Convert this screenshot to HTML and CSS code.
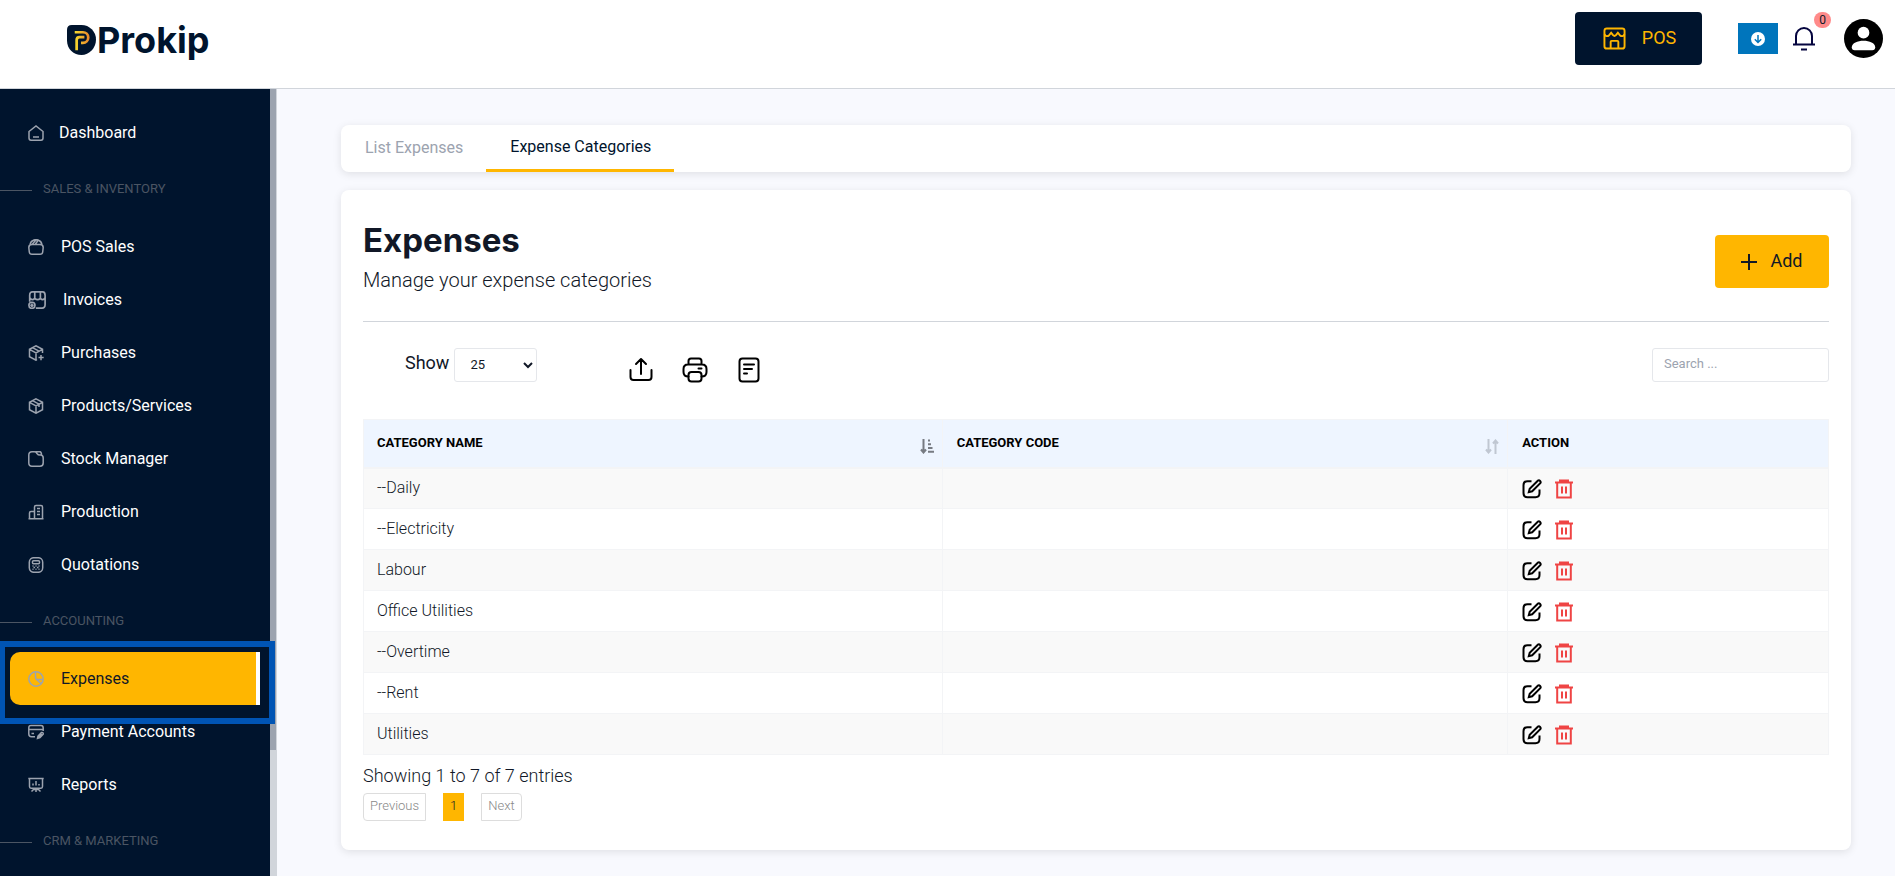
FILE: index.html
```html
<!DOCTYPE html>
<html lang="en">
<head>
    <meta charset="UTF-8">
    <meta name="viewport" content="width=device-width, initial-scale=1.0">
    <title>Expense Categories - Prokip</title>

    <link rel="stylesheet" href="styles.css">
</head>
<body>
    <!-- Icons used more than once -->
    <svg class="sprite" aria-hidden="true">
        <symbol id="icon-edit" viewBox="0 0 20 20">
            <path d="M9.500 2.200H5.500C2.500 2.200 1.500 3.200 1.500 6.200V14C1.500 17 2.500 18.200 5.500 18.200H13.500C16.500 18.200 17.500 17 17.500 14V10.500" />
            <path d="M15.800 1.700 7.700 9.700 6.800 13.100 10.200 12.300 18.300 4.200C19.400 2.600 17.500 0.600 15.800 1.700Z" />
        </symbol>
        <symbol id="icon-trash" viewBox="0 0 20 20">
            <path d="M1 3.500H19M6 3.500V1.500H14V3.500M3.200 3.500V18.500H16.800V3.500M8 7.500V14.500M12 7.500V14.500" />
        </symbol>
    </svg>

    <!-- Top bar -->
    <header class="topbar">
        <a class="logo" href="#" aria-label="Prokip">
            <svg class="logo-mark" viewBox="0 0 30 31" aria-hidden="true">
                <defs>
                    <linearGradient id="gold" gradientUnits="userSpaceOnUse" x1="8" y1="0" x2="23" y2="0">
                        <stop offset="0" stop-color="#f7dc2e" />
                        <stop offset="1" stop-color="#e8862b" />
                    </linearGradient>
                </defs>
                <path d="M5 0H15A15 15 0 0 1 30 15C30 24 23 31 15 31S0 25 0 16V5Q0 0 5 0Z" fill="#00142d" />
                <g fill="none" stroke="url(#gold)" stroke-width="2.800">
                    <path d="M8 7.500H16.500A5.500 5.500 0 0 1 16.500 18.500H14.500" />
                    <path d="M10 26V15.500Q10 12.500 13 12.500H18" />
                </g>
            </svg>
            <span>Prokip</span>
        </a>

        <div class="topbar-actions">
            <button class="pos-button" type="button">
                <svg viewBox="0 0 24 24" aria-hidden="true">
                    <rect x="1.500" y="1.500" width="21" height="21" rx="2.500" />
                    <path d="M1.500 7.500Q3.500 11 6.500 8.500L8.500 6L10.500 8.500Q12 10 13.500 8.500L15.500 6L17.500 8.500Q20.500 11 22.500 7.500M8 22.500V15.500Q8 14.500 9 14.500H15Q16 14.500 16 15.500V22.500" />
                </svg>
                POS
            </button>
            <button class="download-button" type="button" aria-label="Download">
                <svg viewBox="0 0 14 14" aria-hidden="true">
                    <circle cx="7" cy="7" r="7" fill="#fff" />
                    <path d="M7 3V10.500M3.800 7.300 7 10.500 10.200 7.300" />
                </svg>
            </button>
            <button class="bell-button" type="button" aria-label="Notifications">
                <svg viewBox="0 0 22 25" aria-hidden="true">
                    <path d="M3 18V10A8 8 0 0 1 19 10V18M0 18.500H22M8 23.500H14" />
                </svg>
                <span class="badge">0</span>
            </button>
            <button class="avatar" type="button" aria-label="Account">
                <svg viewBox="0 0 40 40" aria-hidden="true">
                    <circle cx="20" cy="20" r="20" />
                    <circle cx="20" cy="14" r="6" fill="#fff" />
                    <path d="M8 29C8 20 32 20 32 29Q32 32 29 32H11Q8 32 8 29Z" fill="#fff" />
                </svg>
            </button>
        </div>
    </header>

    <div class="layout">
        <!-- Side menu -->
        <nav class="sidebar">
            <ul class="menu">
                <li class="dashboard"><a href="#">
                    <svg viewBox="0 0 16 16"><path d="M1 6.500 8 1 15 6.500V13Q15 15.200 13 15.200H3Q1 15.200 1 13ZM5 12H11" /></svg>
                    Dashboard</a></li>
            </ul>

            <h2>SALES &amp; INVENTORY</h2>
            <ul class="menu">
                <li><a href="#">
                    <svg viewBox="0 0 16 16"><path d="M4 5.500H12Q15.200 5.500 15.200 8.500L14.700 13Q14.500 15.200 12 15.200H4Q1.500 15.200 1.300 13L.8 8.500Q.8 5.500 4 5.500ZM2 6Q2.500 2.500 5 1.500 8-.2 11 1.500 13.500 2.500 14 6M4.500 5 8 1M7.500 5 10 1.500" /></svg>
                    POS Sales</a></li>
                <li><a href="#">
                    <svg class="shop" viewBox="0 0 16 16"><path d="M1.500 9.500V4Q1.500 .8 4 .8H13Q15.200 .8 15.200 4V12Q15.200 15.200 12.500 15.200H7M1.500 6Q3.500 9 6 6.500 8.500 9 11 6.500 13.500 9 15.200 6M6 1V6.500M11 1V6.500" /><circle cx="3.500" cy="12.700" r="2.700" /><path d="M3.500 11.200V14.200M2 12.700H5" /></svg>
                    Invoices</a></li>
                <li><a href="#">
                    <svg viewBox="0 0 16 16"><path d="M14.500 8V4.300L8 .8 1.500 4.300V11.700L8 15.200 9 14.500M1.500 4.300 8 7.800 14.500 4.300M8 7.800V15M4.500 2.700 11 6.200M10.500 12.500H15.700M13 10V15.200" /></svg>
                    Purchases</a></li>
                <li><a href="#">
                    <svg viewBox="0 0 16 16"><path d="M8 .8 14.500 4.300V11.700L8 15.200 1.500 11.700V4.300ZM1.500 4.300 8 7.800 14.500 4.300M8 7.800V15M4.500 2.700 11 6.200V9" /></svg>
                    Products/Services</a></li>
                <li><a href="#">
                    <svg viewBox="0 0 16 16"><path d="M.8 4Q.8 .8 4 .8H6.500Q8 .8 9 2.500 10 4 12 4H13Q15.200 4.500 15.200 7V12Q15.200 15.200 12 15.200H4Q.8 15.200 .8 12ZM7.500 .8H12Q13.500 1 13.500 4" /></svg>
                    Stock Manager</a></li>
                <li><a href="#">
                    <svg viewBox="0 0 16 16"><path d="M.5 14.700H15.500M1.500 14.500V9Q1.500 7.500 3 7.500H6.500M6.500 14.500V3Q6.500 1.500 8 1.500H13Q14.500 1.500 14.500 3V14.500M9 4.500H12M9 7.500H12M9 10.500H12" /></svg>
                    Production</a></li>
                <li><a href="#">
                    <svg viewBox="0 0 16 16"><rect x="1.300" y=".7" width="13.400" height="14.600" rx="4.500" /><rect x="4.500" y="3.700" width="7" height="3" rx="1" /><path d="M4.500 9H5.500M7.500 9H8.500M10.500 9H11.500M5.500 10.500H7M9 10.500H10.500M4.500 12.200H5.500M7.500 12.200H8.500M10.500 12.200H11.500" /></svg>
                    Quotations</a></li>
            </ul>

            <h2>ACCOUNTING</h2>
            <ul class="menu">
                <li class="active"><a href="#" aria-current="page">
                    <svg viewBox="0 0 16 16"><circle cx="8" cy="8" r="7.200" /><path d="M7.500 1V6.500Q7.500 8.500 9.500 8.500H15M8.500 8.500 13 12.500" /></svg>
                    Expenses</a></li>
                <li><a href="#">
                    <svg viewBox="0 0 16 16"><path d="M.8 5.500H15.200V4Q15.200 1.500 13 1.500H3Q.8 1.500 .8 4V10Q.8 12.700 3.500 12.700H7M15.200 5V7M3.500 9.500H6M9.500 14.500 10 12 13.500 8.500Q15.500 8 15.200 10.200L12 13.700ZM10.500 13.500 14 10" /></svg>
                    Payment Accounts</a></li>
                <li><a href="#">
                    <svg viewBox="0 0 16 16"><path d="M.3 1.500H15.700M1.500 1.500V9.500Q1.500 11.200 3 11.200H13Q14.500 11.200 14.500 9.500V1.500M5 8.500V6.500M8 8.500V4M11 8.500V7M8 11.500V15M6 12 3.500 14.500M10 12 12.500 14.500M5 12.500H11" /></svg>
                    Reports</a></li>
            </ul>

            <h2>CRM &amp; MARKETING</h2>
        </nav>
        <div class="scroll-track"><div class="scroll-thumb"></div></div>

        <!-- Page content -->
        <main>
            <nav class="tabs">
                <a href="#">List Expenses</a>
                <a class="current" href="#">Expense Categories</a>
            </nav>

            <section class="card">
                <div class="card-header">
                    <div>
                        <h1>Expenses</h1>
                        <p>Manage your expense categories</p>
                    </div>
                    <button class="add-button" type="button">
                        <svg viewBox="0 0 16 16" aria-hidden="true"><path d="M8 0V16M0 8H16" /></svg>
                        Add
                    </button>
                </div>

                <div class="toolbar">
                    <label for="pageSize">Show</label>
                    <select id="pageSize">
                        <option>10</option>
                        <option selected>25</option>
                        <option>50</option>
                        <option>100</option>
                    </select>
                    <div class="exports">
                        <button type="button" aria-label="Export">
                            <svg viewBox="0 0 26 26"><path d="M2.500 13V20Q2.500 23 5.500 23H20.500Q23.500 23 23.500 20V13M13 17V2.500M8 7 13 2 18 7" /></svg>
                        </button>
                        <button type="button" aria-label="Print">
                            <svg viewBox="0 0 26 26"><path d="M6.500 7V4Q6.500 1.500 9 1.500H17Q19.500 1.500 19.500 4V7M6.500 19.500Q1.500 19.500 1.500 15V12Q1.500 7.500 6 7.500H20Q24.500 7.500 24.500 12V15Q24.500 19.500 19.500 19.500M16.500 11.500H19.500" /><rect x="6.500" y="15" width="13" height="9.500" rx="3" /></svg>
                        </button>
                        <button type="button" aria-label="View as document">
                            <svg viewBox="0 0 26 26"><rect x="3.500" y="1.500" width="19" height="23" rx="3" /><path d="M8 7.500H18M8 12H16M8 16.500H11" /></svg>
                        </button>
                    </div>
                    <input class="search" type="search" placeholder="Search ..." aria-label="Search">
                </div>

                <table id="categoriesTable">
                    <thead>
                        <tr>
                            <th scope="col"><div class="heading">CATEGORY NAME
                                <svg class="sort sorted" viewBox="0 0 14 15"><path d="M3.500 0V13M1 10.500 3.500 13.500 6 10.500M8 1.500H10M8 5.200H11M8 9H12.500M8 12.800H14" /></svg></div></th>
                            <th scope="col"><div class="heading">CATEGORY CODE
                                <svg class="sort" viewBox="0 0 14 15"><path d="M3.500 0V13M1 10.500 3.500 13.500 6 10.500M10.500 15V2M8 4.500 10.500 1.500 13 4.500" /></svg></div></th>
                            <th scope="col">ACTION</th>
                        </tr>
                    </thead>
                    <tbody>
                        <!-- Rows are added by the script -->
                    </tbody>
                </table>

                <p class="summary">Showing 1 to 7 of 7 entries</p>
                <div class="pagination">
                    <button class="previous" type="button">Previous</button>
                    <button class="page" type="button">1</button>
                    <button class="next" type="button">Next</button>
                </div>
            </section>
        </main>
    </div>

    <script>
        const categories = ['--Daily', '--Electricity', 'Labour', 'Office Utilities', '--Overtime', '--Rent', 'Utilities'];

        // Add one row per category
        const tableBody = document.querySelector('#categoriesTable tbody');
        categories.forEach(name => {
            const row = document.createElement('tr');
            row.innerHTML = `
                <td>${name}</td>
                <td></td>
                <td><div class="row-actions">
                    <button class="edit" type="button" aria-label="Edit ${name}"><svg><use href="#icon-edit"></use></svg></button>
                    <button class="delete" type="button" aria-label="Delete ${name}"><svg><use href="#icon-trash"></use></svg></button>
                </div></td>
            `;
            tableBody.appendChild(row);
        });
    </script>
</body>
</html>
```
FILE: styles.css
```css
/* General styling */
* {
    box-sizing: border-box;
}

body {
    display: flex;
    flex-direction: column;
    height: 100vh;
    margin: 0;
    overflow: hidden;
    font-family: Roboto, sans-serif;
    font-size: 16px;
    color: #111827;
    background-color: #f8f9fe;
}

h1, h2, p, ul {
    margin: 0;
    padding: 0;
}

a {
    color: inherit;
    text-decoration: none;
}

button {
    padding: 0;
    border: 0;
    background: none;
    font-family: inherit;
    cursor: pointer;
}

svg {
    display: block;
    flex: none;
    fill: none;
    stroke: currentColor;
    stroke-width: 2;
}

.sprite {
    position: absolute;
    width: 0;
    height: 0;
}

/* Top bar */
.topbar {
    display: flex;
    flex: none;
    justify-content: space-between;
    height: 89px;
    padding: 12px 12px 0 67px;
    border-bottom: 1px solid #d1d5db;
    background-color: white;
}

.logo {
    display: flex;
    align-items: center;
    align-self: flex-start;
    height: 56px;
    gap: 1px;
    color: #00142d;
    font-family: Inter, sans-serif;
    font-size: 36px;
    font-weight: 700;
}

.logo-mark {
    width: 29px;
    height: 30px;
    stroke: none;
}

.topbar-actions {
    display: flex;
    align-items: center;
    height: 53px;
}

.pos-button {
    display: flex;
    align-items: center;
    justify-content: center;
    gap: 16px;
    width: 127px;
    height: 53px;
    margin-right: 36px;
    padding: 0 0 2px 2px;
    border-radius: 4px;
    color: #ffb600;
    background-color: #00142d;
    font-size: 18px;
}

.pos-button svg {
    width: 23px;
    height: 23px;
    margin-top: 2px;
}

.download-button {
    display: flex;
    align-items: center;
    justify-content: center;
    width: 40px;
    height: 31px;
    margin-right: 15px;
    color: #0075bc;
    background-color: #0075bc;
}

.download-button svg {
    width: 14px;
    height: 14px;
    stroke-width: 1.5;
}

.download-button circle {
    stroke: none;
}

.bell-button {
    position: relative;
    margin-right: 29px;
    color: #05053f;
}

.bell-button svg {
    width: 22px;
    height: 25px;
}

/* Unread count over the bell */
.badge {
    position: absolute;
    top: -14px;
    right: -16px;
    width: 17px;
    border-radius: 8px;
    color: #111827;
    background-color: #ff8a8a;
    font-size: 12px;
    line-height: 16px;
}

.avatar svg {
    width: 39px;
    height: 39px;
    fill: black;
    stroke: none;
}

/* Sidebar */
.layout {
    display: flex;
    flex: 1;
    min-height: 0;
}

.sidebar {
    flex: none;
    width: 270px;
    padding-top: 17px;
    color: white;
    background-color: #00142d;
}

.sidebar h2 {
    display: flex;
    align-items: center;
    gap: 11px;
    height: 59px;
    color: #4b5563;
    font-size: 13px;
    font-weight: 400;
}

.sidebar h2::before {
    content: "";
    width: 32px;
    height: 1px;
    margin-top: 4px;
    background-color: #4b5563;
}

.menu {
    list-style: none;
}

.menu + h2 + .menu {
    padding-top: 2px;
}

.menu li {
    position: relative;
    margin: 0 10px;
}

.menu a {
    display: flex;
    align-items: center;
    gap: 17px;
    height: 53px;
    padding-left: 18px;
}

.dashboard a {
    gap: 15px;
}

.menu svg {
    width: 16px;
    height: 16px;
    margin-top: 1px;
    color: #9ca3af;
    stroke-width: 1.5;
}

.menu .shop {
    width: 18px;
    height: 18px;
}

.menu .active a {
    border-right: 4px solid white;
    border-radius: 10px 0 0 10px;
    color: #111827;
    background-color: #ffb600;
}

/* Guide frame around the current entry */
.active::after {
    content: "";
    position: absolute;
    inset: -11px -15px -19px -11px;
    border: 6px solid #0054b4;
    pointer-events: none;
}

.scroll-track {
    flex: none;
    width: 7px;
    border-right: 1px solid #d1d5db;
    background-color: #d1d5db;
}

.scroll-thumb {
    height: 84%;
    background-color: #9ca3af;
}

/* Content area */
main {
    flex: 1;
    min-width: 0;
    padding: 36px 44px 0 64px;
}

.tabs, .card {
    border-radius: 8px;
    background-color: white;
    box-shadow: 0 2px 8px rgba(0, 0, 0, 0.1);
}

.tabs {
    display: flex;
    height: 47px;
    margin-bottom: 18px;
}

.tabs a {
    padding: 0 23px 0 24px;
    color: #9ca3af;
    line-height: 46px;
}

.tabs .current {
    border-bottom: 3px solid #ffb600;
    color: #00142d;
    line-height: 44px;
}

.card {
    padding: 30px 22px 29px;
}

.card-header {
    display: flex;
    align-items: flex-end;
    justify-content: space-between;
    padding-bottom: 27px;
    border-bottom: 1px solid #d1d5db;
}

.card-header h1 {
    font-family: Inter, sans-serif;
    font-size: 33px;
    font-weight: 700;
    line-height: 40px;
}

.card-header p {
    margin-top: 6px;
    font-size: 20px;
    font-weight: 300;
    line-height: 28px;
}

.add-button {
    display: flex;
    align-items: center;
    justify-content: center;
    gap: 13px;
    width: 114px;
    height: 53px;
    margin-bottom: 6px;
    padding-bottom: 2px;
    border-radius: 4px;
    color: #111827;
    background-color: #ffb600;
    font-size: 18px;
}

.add-button svg {
    width: 16px;
    height: 16px;
    margin-top: 2px;
}

/* Table controls */
.toolbar {
    display: flex;
    margin: 26px 0 37px;
    padding-left: 42px;
}

.toolbar label {
    font-size: 18px;
    line-height: 30px;
}

.toolbar select, .search {
    height: 34px;
    border: 1px solid #e5e7eb;
    border-radius: 3px;
    background-color: white;
    font-family: inherit;
    font-size: 13px;
}

.toolbar select {
    width: 83px;
    margin-left: 5px;
    padding: 0 0 2px 11px;
    color: #111827;
}

.exports {
    display: flex;
    gap: 28px;
    height: 34px;
    margin-left: 91px;
    padding-top: 9px;
}

.exports svg {
    width: 26px;
    height: 26px;
    color: black;
    stroke-linecap: round;
    stroke-linejoin: round;
}

.search {
    width: 177px;
    margin-left: auto;
    padding: 0 11px 4px;
}

.search::placeholder {
    color: #9ca3af;
}

/* Table styling */
table {
    width: 100%;
    border-collapse: collapse;
    table-layout: fixed;
}

th, td {
    padding: 0 14px 2px;
    border: 1px solid #f3f4f6;
    text-align: left;
}

th {
    height: 48px;
    border-bottom-width: 2px;
    color: black;
    background-color: #eef5ff;
    font-size: 13px;
    font-weight: 700;
}

th:nth-child(1) { width: 39.5%; } /* Category Name */
th:nth-child(2) { width: 38.6%; } /* Category Code */

th:nth-child(1), td:nth-child(1) {
    padding-left: 13px;
}

td {
    height: 41px;
    font-size: 16px;
    font-weight: 300;
}

tbody tr:nth-child(odd) {
    background-color: #f9f9f9;
}

.heading {
    display: flex;
    align-items: center;
    justify-content: space-between;
    margin-right: -6px;
}

.sort {
    width: 14px;
    height: 15px;
    margin-top: 8px;
    color: #c0c7d2;
}

.sorted {
    color: #777b82;
}

.row-actions {
    display: flex;
    gap: 12px;
    padding-top: 4px;
}

.row-actions svg {
    width: 20px;
    height: 20px;
}

.edit {
    color: black;
}

.delete {
    color: #ef4444;
}

/* Table footer */
.summary {
    padding-top: 7px;
    font-size: 18px;
    font-weight: 300;
    line-height: 28px;
}

.pagination {
    display: flex;
    gap: 17px;
    margin-top: 3px;
}

.pagination button {
    height: 28px;
    padding: 0 6px 3px;
    border: 1px solid #ddd;
    color: #888;
    font-size: 13px;
    font-weight: 300;
}

.pagination .previous {
    border-radius: 4px 0 0 4px;
}

.pagination .next {
    border-radius: 0 4px 4px 0;
}

.pagination .page {
    border-color: #ffb600;
    color: #111827;
    background-color: #ffb600;
}
```
